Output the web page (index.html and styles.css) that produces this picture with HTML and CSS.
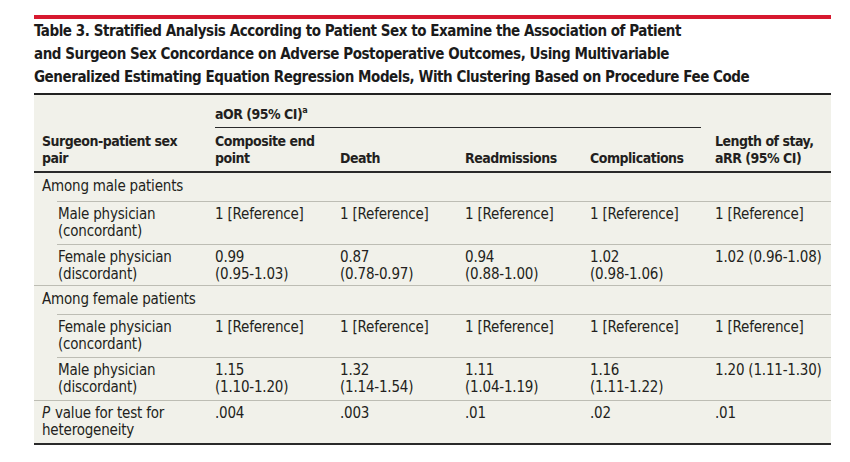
FILE: index.html
```html
<!DOCTYPE html>
<html lang="en">
<head>
<meta charset="utf-8">
<title>Table 3</title>
<link rel="stylesheet" href="styles.css">
</head>
<body>
<div class="figure">
  <div class="rule-red"></div>
  <h2 class="caption">Table 3. Stratified Analysis According to Patient Sex to Examine the Association of Patient<br>and Surgeon Sex Concordance on Adverse Postoperative Outcomes, Using Multivariable<br>Generalized Estimating Equation Regression Models, With Clustering Based on Procedure Fee Code</h2>
  <table class="data">
    <colgroup>
      <col class="c-label">
      <col class="c-val">
      <col class="c-val">
      <col class="c-val">
      <col class="c-val">
      <col class="c-last">
    </colgroup>
    <thead>
      <tr class="h1">
        <th rowspan="2" class="hl">Surgeon-patient sex pair</th>
        <th colspan="4" class="span"><div class="span-in">aOR (95% CI)<sup>a</sup></div></th>
        <th rowspan="2" class="hl last-col">Length of stay, aRR (95% CI)</th>
      </tr>
      <tr class="h2">
        <th>Composite end point</th>
        <th>Death</th>
        <th>Readmissions</th>
        <th>Complications</th>
      </tr>
    </thead>
    <tbody>
      <tr class="sec">
        <td class="ind-line">Among male patients</td>
        <td></td><td></td><td></td><td></td><td class="last-col"></td>
      </tr>
      <tr class="sub">
        <td class="ind ind-line">Male physician (concordant)</td>
        <td>1 [Reference]</td><td>1 [Reference]</td><td>1 [Reference]</td><td>1 [Reference]</td><td class="last-col">1 [Reference]</td>
      </tr>
      <tr class="sub tight">
        <td class="ind">Female physician (discordant)</td>
        <td>0.99<br>(0.95-1.03)</td><td>0.87<br>(0.78-0.97)</td><td>0.94<br>(0.88-1.00)</td><td>1.02<br>(0.98-1.06)</td><td class="last-col">1.02 (0.96-1.08)</td>
      </tr>
      <tr class="sec">
        <td class="ind-line">Among female patients</td>
        <td></td><td></td><td></td><td></td><td class="last-col"></td>
      </tr>
      <tr class="sub">
        <td class="ind ind-line">Female physician (concordant)</td>
        <td>1 [Reference]</td><td>1 [Reference]</td><td>1 [Reference]</td><td>1 [Reference]</td><td class="last-col">1 [Reference]</td>
      </tr>
      <tr class="sub">
        <td class="ind">Male physician (discordant)</td>
        <td>1.15<br>(1.10-1.20)</td><td>1.32<br>(1.14-1.54)</td><td>1.11<br>(1.04-1.19)</td><td>1.16<br>(1.11-1.22)</td><td class="last-col">1.20 (1.11-1.30)</td>
      </tr>
      <tr class="last">
        <td><i class="pv">P</i> value for test for heterogeneity</td>
        <td>.004</td><td>.003</td><td>.01</td><td>.02</td><td class="last-col">.01</td>
      </tr>
    </tbody>
  </table>
</div>
</body>
</html>
```

FILE: styles.css
```css
html, body {
  margin: 0;
  padding: 0;
  background: #ffffff;
}

body {
  font-family: "DejaVu Sans Condensed", "Liberation Sans", sans-serif;
  color: #231f20;
}

.figure {
  width: 797px;
  margin: 15px 0 0 34px;
}

.rule-red {
  height: 4px;
  background: #d7192f;
}

.caption {
  margin: 0;
  padding: 1px 0 4px 0;
  font-size: 15px;
  line-height: 23px;
  letter-spacing: -0.45px;
  font-weight: bold;
  color: #1b1b1b;
  white-space: nowrap;
  border-bottom: 2px solid #222;
}

.data {
  width: 797px;
  border-collapse: separate;
  border-spacing: 0;
  background: #f1f1ea;
  table-layout: fixed;
  font-size: 15px;
  line-height: 17px;
  letter-spacing: -0.2px;
}

.c-label { width: 173px; }
.c-val { width: 125px; }
.c-last { width: 124px; }

th, td {
  text-align: left;
  vertical-align: top;
  padding: 4px 8px 4px 8px;
}

th {
  font-weight: bold;
  font-size: 14px;
  letter-spacing: -0.5px;
  vertical-align: bottom;
}

.last-col {
  padding-right: 0;
}

thead .hl {
  padding-top: 0;
  padding-bottom: 4px;
  border-bottom: 2px solid #2a2a2a;
}

.h1 .span {
  padding: 11px 6px 0 8px;
}

.span-in {
  padding-bottom: 4px;
  border-bottom: 1.5px solid #2a2a2a;
}

.span-in sup {
  font-size: 9px;
  line-height: 0;
  vertical-align: 6px;
}

.h2 th {
  padding: 5px 8px 4px 8px;
  border-bottom: 2px solid #2a2a2a;
}

tbody td {
  border-bottom: 1px solid #bdbdb4;
}

.sec td {
  padding-top: 5px;
  padding-bottom: 6px;
}

td.ind {
  padding-left: 24px;
}

td.ind-line {
  border-bottom: none;
  padding-bottom: 7px;
  background: linear-gradient(#bdbdb4, #bdbdb4) no-repeat right bottom / calc(100% - 23px) 1px;
}

.sub td {
  padding-top: 4px;
  padding-bottom: 4px;
}

.sub.tight td {
  padding-bottom: 2px;
}

.sub td.ind-line {
  padding-bottom: 5px;
}

.pv {
  padding-right: 1px;
}

tr.last td {
  border-bottom: 2px solid #2a2a2a;
  padding-top: 4px;
  padding-bottom: 4px;
}
```
